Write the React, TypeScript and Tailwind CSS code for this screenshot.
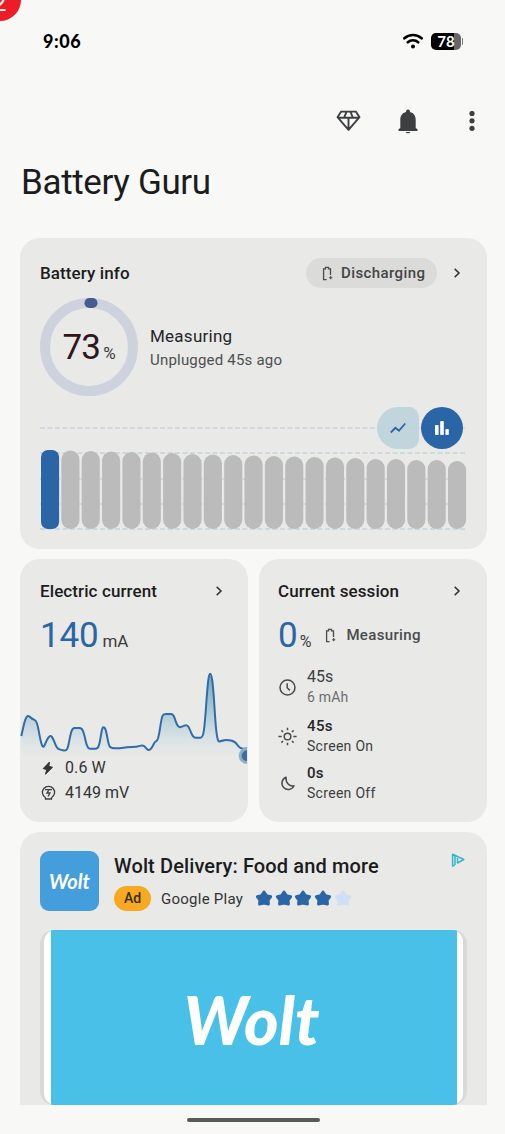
// App.tsx
import React from "react";

const barTops = [
  450, 450.5, 451, 451.5, 452, 452.5, 453, 454, 454.5, 455, 455.5, 456, 456.5, 457, 457.5, 458, 459, 459, 460, 460, 461,
];

const currentPoints: [number, number][] = [
  [34, 543], [42, 505], [50, 483], [58, 483], [66, 492], [78, 496], [84, 515], [92, 560], [100, 581], [110, 555],
  [120, 541], [128, 547], [140, 579], [150, 584], [168, 588], [174, 578], [180, 545], [187, 519], [201, 519],
  [215, 519], [222, 535], [232, 581], [248, 581], [264, 581], [270, 560], [276, 519], [283, 515], [289, 530],
  [296, 570], [303, 580], [330, 580], [350, 576], [380, 576], [400, 569], [410, 582], [418, 587], [428, 575],
  [434, 560], [445, 555], [455, 486], [461, 477], [476, 477], [490, 477], [497, 500], [505, 517], [515, 516],
  [532, 508], [540, 525], [550, 548], [564, 548], [579, 548], [585, 500], [592, 400], [597, 356], [604, 356],
  [610, 400], [620, 561], [635, 558], [650, 554], [675, 559], [685, 575], [697, 582], [711, 580],
];

// Smooth curve through the midpoints of the samples
function smooth(points: [number, number][]) {
  let d = `M${points[0][0]} ${points[0][1]}`;
  for (let i = 1; i < points.length - 1; i++) {
    const [x, y] = points[i];
    const [nx, ny] = points[i + 1];
    d += ` Q${x} ${y} ${(x + nx) / 2} ${(y + ny) / 2}`;
  }
  const last = points[points.length - 1];
  return `${d} L${last[0]} ${last[1]}`;
}

function Chevron() {
  return (
    <svg className="h-3 w-2 shrink-0" viewBox="0 0 8 12" fill="none" stroke="#333435" strokeWidth="1.5">
      <path d="M1.7 1.9 6 6 1.7 10.1" />
    </svg>
  );
}

function BatteryIcon() {
  return (
    <svg className="h-[15px] w-[11px] shrink-0" viewBox="0 0 11 15" fill="none" stroke="#4a4b4c" strokeWidth="1.3">
      <path d="M4.6 13.6H1.6V2.8h1.9V1.3h3v1.500h2v6.200" />
      <path d="M6.8 11.200h3.800L8.700 13.600z" fill="#4a4b4c" stroke="none" />
      <path d="M8.700 10v2" strokeWidth="1.100" />
    </svg>
  );
}

function Star({ color }: { color: string }) {
  return (
    <svg className="h-[17px] w-[18px]" viewBox="0 0 18 17">
      <path
        d="M9 2 11.4 5.600 15.700 6.700 13.200 10.200 13.500 14.200 9 13.200 4.500 14.200 4.800 10.200 2.300 6.700 6.600 5.600Z"
        fill={color}
        stroke={color}
        strokeWidth="2.800"
        strokeLinejoin="round"
      />
    </svg>
  );
}

function StatusBar() {
  return (
    <div className="flex h-[82px] items-center justify-between pl-[43px] pr-[42px]">
      <span className="font-['Lato'] text-[18px] font-black leading-5 tracking-[0.55px] text-black">9:06</span>
      <div className="flex items-center gap-2">
        <svg className="h-4 w-5" viewBox="0 0 20 16" fill="none" stroke="#000" strokeWidth="2.6" strokeLinecap="round">
          <path d="M1.4 5.3C6.2.9 13.8.9 18.6 5.3M4.8 9.3c2.9-2.7 7.5-2.7 10.4 0" />
          <circle cx="10" cy="13.4" r="2" fill="#000" stroke="none" />
        </svg>
        <div className="flex items-center gap-px">
          <div className="flex h-[17px] w-[30px] items-center justify-center rounded-[5px] bg-linear-to-r from-black from-78% to-[#666] to-78% font-['Lato'] text-[15px] font-bold leading-none text-white">
            78
          </div>
          <div className="h-[7px] w-px rounded-r bg-[#777]" />
        </div>
      </div>
    </div>
  );
}

function Toolbar() {
  return (
    <div className="flex h-[78px] items-center justify-end pr-[28px]">
      <svg className="h-[22px] w-[25px]" viewBox="0 0 25 22" fill="none" stroke="#3e3f41" strokeWidth="1.9" strokeLinejoin="round">
        <path d="M5.200 1.600h14.600l3.700 5.600L12.500 19.800 1.500 7.200zM1.500 7.700h22M12.500 8v11.600M10.500 1.800 8.200 7.500M14.500 1.800l2.300 5.700" />
      </svg>
      <svg className="ml-[37px] h-[25px] w-5" viewBox="0 0 20 25" fill="#3e3f41">
        <path d="M10 .5c-1.200 0-2 .8-2 2v.6C4.300 4 2.300 7 2.300 10.700v8.300L.5 20.200v1.700h19v-1.700L17.700 19v-8.300C17.700 7 15.700 4 12 3.100v-.6c0-1.200-.8-2-2-2zM7.500 23a2.600 1.700 0 0 0 5 0z" />
      </svg>
      <svg className="ml-[49px] h-5 w-[10px]" viewBox="0 0 10 20" fill="#3e3f41">
        <circle cx="5" cy="2.500" r="2.600" />
        <circle cx="5" cy="9.800" r="2.600" />
        <circle cx="5" cy="17.300" r="2.600" />
      </svg>
    </div>
  );
}

function BatteryInfo() {
  return (
    <section className="h-[311px] rounded-[20px] bg-[#e9e9e8] px-5 pt-5">
      <div className="flex h-[30px] items-center">
        <h2 className="text-[17px] font-medium leading-6 text-[#1b1c1d] tracking-[0.1px]">Battery info</h2>
        <div className="ml-auto flex h-[30px] w-[131px] items-center gap-2 rounded-full bg-[#dbdbda] pl-4">
          <BatteryIcon />
          <span className="text-[15px] font-medium leading-5 tracking-[0.4px] text-[#444546]">Discharging</span>
        </div>
        <div className="ml-4 mr-[6px] flex">
          <Chevron />
        </div>
      </div>

      <div className="mt-[10px] flex items-center gap-3">
        <div className="relative h-[98px] w-[98px] shrink-0">
          <svg className="absolute inset-0" viewBox="0 0 98 98" fill="none">
            <circle cx="49" cy="49" r="44" stroke="#ced2dc" strokeWidth="10" />
            <rect x="44.500" y="0" width="13" height="10" rx="4.800" fill="#475b93" />
          </svg>
          <div className="relative flex h-full items-baseline justify-center pt-[28px] leading-[44px]">
            <span className="text-[35px] text-[#2d171b] tracking-[-0.8px]">73</span>
            <span className="ml-[3px] text-[17px] text-[#3d3e40]">%</span>
          </div>
        </div>
        <div className="pt-[1px]">
          <p className="text-[17px] leading-6 text-[#252627] tracking-[0.25px]">Measuring</p>
          <p className="text-[15px] leading-6 text-[#4e4f50] tracking-[0.2px]">Unplugged 45s ago</p>
        </div>
      </div>

      {/* History chart */}
      <div className="relative mt-[10px] h-[125px]">
        <svg className="h-full w-[427px]" viewBox="40 406 427 125">
          <g stroke="#c4d4da" strokeWidth="1.300" strokeDasharray="5 2.500">
            {[428, 453, 479, 504, 529].map((y) => (
              <path key={y} d={`M40 ${y}H466`} />
            ))}
          </g>
          {barTops.map((top, i) => (
            <rect
              key={i}
              x={41 + i * 20.35}
              y={top}
              width="18.100"
              height={529 - top}
              rx={i === 0 ? 7 : 9}
              fill={i === 0 ? "#2a65a6" : "#babbba"}
            />
          ))}
        </svg>
        <div className="absolute right-[4px] top-[1px] flex gap-[2px]">
          <div className="flex h-[42px] w-[42px] items-center justify-center rounded-l-[21px] rounded-r-[10px] bg-[#bdd3db]/90">
            <svg className="h-3 w-4" viewBox="0 0 16 12" fill="none" stroke="#2a65a6" strokeWidth="1.800">
              <path d="m.8 10.500 4.600-4.700 3.500 3L15.200 1.500" />
            </svg>
          </div>
          <div className="flex h-[42px] w-[42px] items-center justify-center rounded-full bg-[#2a65a6]">
            <svg className="h-[14px] w-[14px]" viewBox="0 0 14 14" fill="#fff">
              <rect x="0" y="4" width="3.600" height="10" rx=".8" />
              <rect x="5.200" y="0" width="3.600" height="14" rx=".8" />
              <rect x="10.400" y="8" width="3.400" height="6" rx=".8" />
            </svg>
          </div>
        </div>
      </div>
    </section>
  );
}

function ElectricCurrent() {
  const line = smooth(currentPoints);
  return (
    <section className="h-[263px] overflow-hidden rounded-[20px] bg-[#e9e9e8] pt-4">
      <div className="flex h-8 items-center justify-between pl-5 pr-[25px]">
        <h2 className="text-[17px] font-medium leading-6 text-[#1b1c1d] tracking-[0.1px]">Electric current</h2>
        <Chevron />
      </div>
      <div className="flex h-[63px] items-baseline pl-5 pt-[7px] leading-[44px]">
        <span className="text-[35px] text-[#2a65a6] tracking-[-0.2px]">140</span>
        <span className="ml-[4px] text-[17px] text-[#3d3e40]">mA</span>
      </div>
      <svg className="block h-[85px] w-full overflow-visible" viewBox="30 345 684 255" fill="none">
        <defs>
          <linearGradient id="area" gradientUnits="userSpaceOnUse" x1="0" y1="350" x2="0" y2="608">
            <stop offset="0" stopColor="#6ba3bf" />
            <stop offset=".5" stopColor="#9fc3d1" stopOpacity=".75" />
            <stop offset="1" stopColor="#c9dde3" stopOpacity="0" />
          </linearGradient>
        </defs>
        <path d={`${line} V608 H34 Z`} fill="url(#area)" />
        <path d={line} stroke="#2f6ca9" strokeWidth="6" strokeLinejoin="round" />
        <path d="M711 577A25 25 0 0 0 711 627Z" fill="#8db0c5" />
        <path d="M711 586A16 16 0 0 0 711 618Z" fill="#3b6f9d" />
      </svg>
      <div className="relative flex h-[25px] items-center pl-5">
        <svg className="h-[14px] w-4" viewBox="0 0 16 14" fill="#333435">
          <path d="M9.500 1 3.200 7.600l3.500 1-1.200 4.600L12.500 6.300l-3.700-1z" stroke="#333435" strokeLinejoin="round" />
        </svg>
        <span className="ml-[9px] text-[16px] leading-6 text-[#333435] tracking-[0.1px]">0.6 W</span>
      </div>
      <div className="flex h-[25px] items-center pl-[21px]">
        <svg className="h-[15px] w-[15px]" viewBox="0 0 15 15" fill="none" stroke="#3d3e40" strokeWidth="1.300">
          <path d="M4.500 12.700a6.100 6.100 0 1 1 6 0M4.500 12.300v1.700h6v-1.700M4 4.700h7" />
          <path d="M7.800 5.200 6 8h3l-1.900 3.500" />
        </svg>
        <span className="ml-[9px] text-[16px] leading-6 text-[#333435]">4149 mV</span>
      </div>
    </section>
  );
}

function CurrentSession() {
  return (
    <section className="h-[263px] rounded-[20px] bg-[#e9e9e8] pl-[19px] pt-4">
      <div className="flex h-8 items-center justify-between pr-[26px]">
        <h2 className="text-[17px] font-medium leading-6 text-[#1b1c1d] tracking-[0.1px]">Current session</h2>
        <Chevron />
      </div>
      <div className="flex h-[56px] items-center">
        <div className="flex items-baseline pt-[7px] leading-[44px]">
          <span className="text-[35px] text-[#2a65a6]">0</span>
          <span className="ml-[2px] text-[16px] text-[#3d3e40]">%</span>
        </div>
        <div className="ml-[14px] flex items-center gap-[10px]">
          <BatteryIcon />
          <span className="text-[15px] font-medium leading-5 text-[#4a4b4c] tracking-[0.35px]">Measuring</span>
        </div>
      </div>

      <div className="mt-1 flex items-center gap-[10px]">
        <svg className="h-[19px] w-[19px]" viewBox="0 0 19 19" fill="none" stroke="#4a4b4c" strokeWidth="1.500">
          <circle cx="9.500" cy="9.500" r="7.500" />
          <path d="M9.200 5.200v4.500l2.700 2.700" />
        </svg>
        <div>
          <p className="text-[16px] leading-5 text-[#3d3e40]">45s</p>
          <p className="text-[14px] leading-5 text-[#6d6e6f] tracking-[0.2px]">6 mAh</p>
        </div>
      </div>
      <div className="mt-[9px] flex items-center gap-[10px]">
        <svg className="h-[19px] w-[19px]" viewBox="0 0 19 19" fill="none" stroke="#4a4b4c" strokeWidth="1.500">
          <circle cx="9.500" cy="9.500" r="3.300" />
          <path d="M9.500.7v2.600M9.500 15.700v2.600M.4 9.500h3.300M15.300 9.500h3.300M3.400 3.400 5 5M14 14l1.600 1.600M3.400 15.600 5 14M14 5l1.600-1.600" />
        </svg>
        <div>
          <p className="text-[15px] font-medium leading-5 text-[#252627] tracking-[0.4px]">45s</p>
          <p className="text-[14px] leading-5 text-[#3d3e40] tracking-[0.3px]">Screen On</p>
        </div>
      </div>
      <div className="mt-[7px] flex items-center gap-[10px]">
        <svg className="h-[19px] w-[19px]" viewBox="0 0 19 19" fill="none" stroke="#4a4b4c" strokeWidth="1.500" strokeLinejoin="round">
          <path d="M8 3.300a6.300 6.300 0 1 0 8 8.500C11.500 13 7.500 8.500 8 3.300z" />
        </svg>
        <div>
          <p className="text-[15px] font-medium leading-5 text-[#252627] tracking-[0.2px]">0s</p>
          <p className="text-[14px] leading-5 text-[#3d3e40] tracking-[0.3px]">Screen Off</p>
        </div>
      </div>
    </section>
  );
}

function AdCard() {
  return (
    <section className="h-[273px] overflow-hidden rounded-t-[20px] bg-[#e9e9e8] px-5 pt-[19px]">
      <div className="flex">
        <div className="flex h-[60px] w-[59px] shrink-0 items-center justify-center rounded-[9px] bg-[#459edc]">
          <span className="font-['Lato'] text-[20px] font-bold italic leading-6 text-white">Wolt</span>
        </div>
        <div className="ml-[15px] pt-[3px]">
          <h2 className="whitespace-nowrap text-[20px] font-medium leading-6 tracking-[0.12px] text-[#1b1c1d]">
            Wolt Delivery: Food and more
          </h2>
          <div className="mt-2 flex h-[25px] items-center">
            <span className="flex h-[25px] w-[37px] items-center justify-center rounded-full bg-[#f8a922] text-[14px] font-medium text-[#3b2c14]">
              Ad
            </span>
            <span className="ml-[10px] w-[84px] whitespace-nowrap text-[15px] leading-6 tracking-[0.25px] text-[#333435]">
              Google Play
            </span>
            <div className="ml-[10px] flex gap-[1.700px]">
              <Star color="#2a65a6" />
              <Star color="#2a65a6" />
              <Star color="#2a65a6" />
              <Star color="#2a65a6" />
              <Star color="#cfe0f5" />
            </div>
          </div>
        </div>
        <svg className="ml-auto mr-[2px] mt-[2px] h-[14px] w-[14px]" viewBox="0 0 14 14" fill="none" stroke="#35b5ca" strokeWidth="1.500" strokeLinejoin="round">
          <path d="M3.800 12.300 1.600 13V1.300L12.800 6.500 6.500 10V4.900M4 3v9" />
        </svg>
      </div>

      <div className="mt-[19px] h-[175px] w-[427px] overflow-hidden rounded-[14px] bg-[#d9d9d8] px-1">
        <div className="h-full rounded-[12px] bg-white px-[6.500px]">
          <div className="flex h-full items-center justify-center bg-[#49c0e8] pr-1 pt-1">
            <span className="font-['Lato'] text-[66px] font-black italic leading-none text-white">Wolt</span>
          </div>
        </div>
      </div>
    </section>
  );
}

export default function App() {
  return (
    <main className="relative h-[1134px] w-[505px] overflow-hidden bg-[#f8f8f7] font-['Roboto',sans-serif]">
      {/* Corner badge */}
      <div className="absolute -left-[21px] -top-[21px] h-[42px] w-[42px] rounded-full bg-[#ec1c28]">
        <span className="absolute left-[14px] top-[12px] text-[24px] leading-6 text-white">2</span>
      </div>

      <StatusBar />
      <Toolbar />
      <h1 className="pl-[21px] pt-px text-[35px] leading-[43px] tracking-[-0.35px] text-[#1b1c1d]">Battery Guru</h1>

      <div className="mt-[34px] pl-5 pr-[18px]">
        <BatteryInfo />
        <div className="mt-[10px] grid grid-cols-2 gap-[11px]">
          <ElectricCurrent />
          <CurrentSession />
        </div>
        <div className="mt-[10px]">
          <AdCard />
        </div>
      </div>

      <div className="ml-[187px] mt-[13px] h-1 w-[133px] rounded-full bg-[#555a5a]" />
    </main>
  );
}
